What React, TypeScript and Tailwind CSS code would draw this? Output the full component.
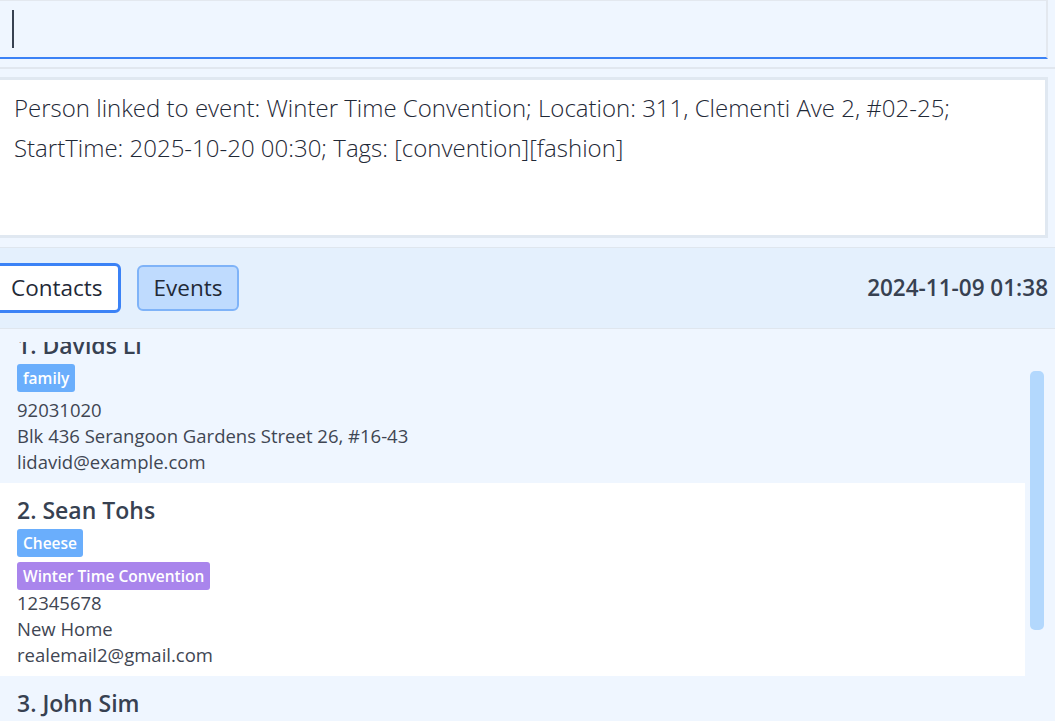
import React from "react";

type Person = {
  name: string;
  tags: string[];
  events: string[];
  phone?: string;
  address?: string;
  email?: string;
};

const people: Person[] = [
  {
    name: "1. Davids Li",
    tags: ["family"],
    events: [],
    phone: "92031020",
    address: "Blk 436 Serangoon Gardens Street 26, #16-43",
    email: "lidavid@example.com",
  },
  {
    name: "2. Sean Tohs",
    tags: ["Cheese"],
    events: ["Winter Time Convention"],
    phone: "12345678",
    address: "New Home",
    email: "realemail2@gmail.com",
  },
  // only the name of the third card is in view
  { name: "3. John Sim", tags: [], events: [] },
];

function PersonCard({ person, index }: { person: Person; index: number }) {
  return (
    <div className={(index % 2 === 0 ? "bg-[#eff6ff]" : "bg-white") + " pl-[17px] pt-[12px] pb-[8px]"}>
      <div className="h-[30px] leading-[30px] text-[23px] font-semibold text-[#374151]">{person.name}</div>
      {person.tags.length > 0 && (
        <div className="mt-[4px] mb-[5px] flex gap-[6px]">
          {person.tags.map((t) => (
            <span key={t} className="h-[28px] leading-[28px] px-[6px] rounded-[3px] bg-[#6aaefc] text-white text-[15.5px] font-semibold">
              {t}
            </span>
          ))}
        </div>
      )}
      {person.events.length > 0 && (
        <div className="flex gap-[6px]">
          {person.events.map((e) => (
            <span key={e} className="h-[28px] leading-[28px] px-[6px] rounded-[3px] bg-[#a985ec] text-white text-[15.5px] font-semibold">
              {e}
            </span>
          ))}
        </div>
      )}
      {person.phone && (
        <div className="text-[18.5px] leading-[26px] text-[#3f4653]">
          <div>{person.phone}</div>
          <div>{person.address}</div>
          <div>{person.email}</div>
        </div>
      )}
    </div>
  );
}

export default function App() {
  return (
    <div className="w-[1055px] h-[721px] overflow-hidden flex flex-col bg-[#eff6ff] font-['Open_Sans',sans-serif] text-[#1f2937]">
      {/* command box */}
      <div className="h-[59px] shrink-0 mr-[7px] -ml-[4px] bg-[#eff6ff] border-t border-r-2 border-[#e3e8ef] border-b-2 border-b-[#3b82f6] flex items-center">
        <span className="ml-[16px] w-[2px] h-[38px] bg-[#374151]" />
      </div>

      <div className="h-[18px] shrink-0 flex items-center">
        <div className="w-full h-[2px] bg-[#e1e7ef]" />
      </div>

      {/* result box */}
      <div className="h-[161px] shrink-0 mr-[7px] -ml-[4px] border-[3px] border-[#e0e8f1] bg-white pl-[15px] pt-[8px]">
        <p className="text-[24px] font-light leading-[40px] text-[#1f2937] whitespace-nowrap">
          Person linked to event: Winter Time Convention; Location: 311, Clementi Ave 2, #02-25;
          <br />
          StartTime: 2025-10-20 00:30; Tags: [convention][fashion]
        </p>
      </div>

      <div className="h-[9px] shrink-0" />

      {/* nav bar */}
      <div className="h-[82px] shrink-0 bg-[#e4f0fd] border-t border-b border-[#dfe6ee] flex items-center pr-[7px]">
        <button className="-ml-[7px] h-[50px] px-[15px] rounded-[6px] border-[3px] border-[#3b82f6] bg-white text-[22.5px] text-[#1f2937]">
          Contacts
        </button>
        <button className="ml-[16px] h-[46px] px-[15px] rounded-[6px] border-2 border-[#7fb3f8] bg-[#bfdbfe] text-[22.5px] text-[#1f2937]">
          Events
        </button>
        <div className="ml-auto text-[22.5px] font-semibold text-[#374151]">2024-11-09 01:38</div>
      </div>

      {/* list */}
      <div className="relative flex-1 flex flex-col pt-[13px] overflow-hidden">
        <div className="flex-1 overflow-hidden">
          <div className="-mt-[24px] mr-[30px]">
            {people.map((p, i) => (
              <PersonCard key={p.name} person={p} index={i} />
            ))}
          </div>
        </div>
        <div className="absolute left-[1030px] top-[42px] w-[14px] h-[259px] rounded-[5px] bg-[#b3d8fd]" />
      </div>
    </div>
  );
}
